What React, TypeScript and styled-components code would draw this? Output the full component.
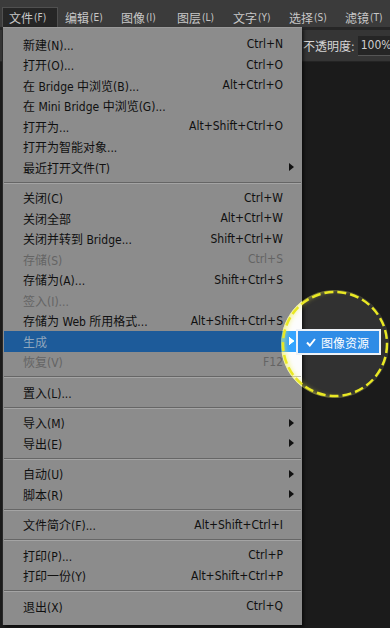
import React from 'react';
import styled, { createGlobalStyle } from 'styled-components';

type Item =
  | 'sep'
  | { label: string; sc?: string; sub?: boolean; off?: boolean; active?: boolean };

const items: Item[] = [
  { label: '新建(N)...', sc: 'Ctrl+N' },
  { label: '打开(O)...', sc: 'Ctrl+O' },
  { label: '在 Bridge 中浏览(B)...', sc: 'Alt+Ctrl+O' },
  { label: '在 Mini Bridge 中浏览(G)...' },
  { label: '打开为...', sc: 'Alt+Shift+Ctrl+O' },
  { label: '打开为智能对象...' },
  { label: '最近打开文件(T)', sub: true },
  'sep',
  { label: '关闭(C)', sc: 'Ctrl+W' },
  { label: '关闭全部', sc: 'Alt+Ctrl+W' },
  { label: '关闭并转到 Bridge...', sc: 'Shift+Ctrl+W' },
  { label: '存储(S)', sc: 'Ctrl+S', off: true },
  { label: '存储为(A)...', sc: 'Shift+Ctrl+S' },
  { label: '签入(I)...', off: true },
  { label: '存储为 Web 所用格式...', sc: 'Alt+Shift+Ctrl+S' },
  { label: '生成', sub: true, active: true },
  { label: '恢复(V)', sc: 'F12', off: true },
  'sep',
  { label: '置入(L)...' },
  'sep',
  { label: '导入(M)', sub: true },
  { label: '导出(E)', sub: true },
  'sep',
  { label: '自动(U)', sub: true },
  { label: '脚本(R)', sub: true },
  'sep',
  { label: '文件简介(F)...', sc: 'Alt+Shift+Ctrl+I' },
  'sep',
  { label: '打印(P)...', sc: 'Ctrl+P' },
  { label: '打印一份(Y)', sc: 'Alt+Shift+Ctrl+P' },
  'sep',
  { label: '退出(X)', sc: 'Ctrl+Q' },
];

const topMenus = [
  ['文件', 'F'],
  ['编辑', 'E'],
  ['图像', 'I'],
  ['图层', 'L'],
  ['文字', 'Y'],
  ['选择', 'S'],
  ['滤镜', 'T'],
];

const App: React.FC = () => {
  return (
    <>
      <GlobalStyle />
      <Screen>
        <MenuBar>
          {topMenus.map(([name, key], i) => (
            <TopItem key={name} $open={i === 0}>
              {name}
              <Mnemonic>({key})</Mnemonic>
            </TopItem>
          ))}
        </MenuBar>
        <OptionsBar>
          <OptionLabel>不透明度:</OptionLabel>
          <OptionInput>100%</OptionInput>
        </OptionsBar>
        <Workspace />

        <Dropdown>
          {items.map((it, i) =>
            it === 'sep' ? (
              <Separator key={i} />
            ) : (
              <Row key={i} $active={it.active}>
                <Label $off={it.off} $active={it.active}>
                  {it.label}
                </Label>
                <Shortcut $off={it.off}>{it.sc}</Shortcut>
                <ArrowCell>{it.sub && <Arrow $white={it.active} />}</ArrowCell>
              </Row>
            )
          )}
        </Dropdown>

        <Lens>
          <svg width="108" height="108" viewBox="0 0 108 108">
            <circle
              cx="54"
              cy="54"
              r="52"
              fill="none"
              stroke="#e9e824"
              strokeWidth="2.5"
              strokeDasharray="9 4"
            />
          </svg>
        </Lens>

        <SubMenu>
          <svg width="10" height="9" viewBox="0 0 10 9">
            <path d="M1 4.5 L3.8 7.5 L9 1" fill="none" stroke="#fff" strokeWidth="2" />
          </svg>
          <SubLabel>图像资源</SubLabel>
        </SubMenu>
      </Screen>
    </>
  );
};

export default App;

const menuGray = '#8c8c8c';
const uiFont = "'DejaVu Sans Condensed', 'Noto Sans CJK SC', sans-serif";

const GlobalStyle = createGlobalStyle`
  html, body {
    margin: 0;
    padding: 0;
    background: #1b1b1b;
  }
  body {
    font-family: ${uiFont};
  }
`;

const Screen = styled.div`
  position: relative;
  width: 390px;
  height: 628px;
  overflow: hidden;
  display: flex;
  flex-direction: column;
  background: #1b1b1b;
`;

const MenuBar = styled.div`
  height: 27px;
  flex: 0 0 27px;
  display: flex;
  align-items: flex-end;
  padding-left: 2px;
  background: #3b3b3b;
`;

const TopItem = styled.div<{ $open?: boolean }>`
  flex: 0 0 56px;
  height: 20px;
  box-sizing: border-box;
  padding-left: 6px;
  display: flex;
  align-items: center;
  font-size: 12px;
  color: #c8c8c8;
  white-space: nowrap;
  background: ${(p) => (p.$open ? '#262626' : 'transparent')};
  border: 1px solid ${(p) => (p.$open ? '#505050' : 'transparent')};
  border-bottom: none;
`;

const Mnemonic = styled.span`
  font-size: 10px;
  margin-left: 1px;
`;

const OptionsBar = styled.div`
  flex: 0 0 31px;
  display: flex;
  align-items: center;
  padding-left: 303px;
  gap: 3px;
  background: #353535;
  border-top: 3px solid #262626;
  border-bottom: 1px solid #242424;
`;

const OptionLabel = styled.span`
  font-size: 12px;
  color: #d6d6d6;
  white-space: nowrap;
`;

const OptionInput = styled.div`
  height: 19px;
  padding: 0 3px;
  display: flex;
  align-items: center;
  font-size: 12px;
  color: #cfcfcf;
  background: #252525;
  border-bottom: 1px solid #555;
  white-space: nowrap;
`;

const Workspace = styled.div`
  flex: 1;
  background: #1b1b1b;
`;

const Dropdown = styled.div`
  position: absolute;
  top: 27px;
  left: 3px;
  width: 299px;
  box-sizing: border-box;
  padding: 6px 1px 8px 1px;
  background: ${menuGray};
  border-top: 1px solid #9a9a9a;
  box-shadow: 2px 2px 3px rgba(0, 0, 0, 0.55), -1px 0 0 #2a2a2a;
`;

const Row = styled.div<{ $active?: boolean }>`
  height: 20.5px;
  display: grid;
  grid-template-columns: 1fr auto 18px;
  align-items: center;
  padding-left: 19px;
  background: ${(p) => (p.$active ? '#1d5b9a' : 'transparent')};
  font-size: 12px;
  white-space: nowrap;
`;

const Label = styled.span<{ $off?: boolean; $active?: boolean }>`
  color: ${(p) => (p.$active ? '#8fa6bd' : p.$off ? '#646464' : '#101010')};
`;

const Shortcut = styled.span<{ $off?: boolean }>`
  color: ${(p) => (p.$off ? '#646464' : '#101010')};
  text-align: right;
`;

const ArrowCell = styled.span`
  display: flex;
  align-items: center;
  padding-left: 6px;
`;

const Arrow = styled.span<{ $white?: boolean }>`
  width: 0;
  height: 0;
  border-top: 4px solid transparent;
  border-bottom: 4px solid transparent;
  border-left: 5px solid ${(p) => (p.$white ? '#ffffff' : '#111111')};
`;

const Separator = styled.div`
  height: 10px;
  display: flex;
  flex-direction: column;
  justify-content: center;
  &::before {
    content: '';
    height: 1px;
    background: #666666;
  }
  &::after {
    content: '';
    height: 1px;
    background: #a4a4a4;
  }
`;

const Lens = styled.div`
  position: absolute;
  left: 281px;
  top: 290px;
  width: 108px;
  height: 108px;
  border-radius: 50%;
  backdrop-filter: brightness(1.8);
  box-shadow: inset 4px 0 5px rgba(240, 240, 70, 0.55);
  svg {
    display: block;
  }
`;

const SubMenu = styled.div`
  position: absolute;
  left: 296px;
  top: 329px;
  width: 85px;
  height: 26px;
  box-sizing: border-box;
  display: flex;
  align-items: center;
  gap: 5px;
  padding-left: 8px;
  background: #2f8ce6;
  border: 2px solid #eef2f7;
`;

const SubLabel = styled.span`
  font-size: 12px;
  color: #ffffff;
  white-space: nowrap;
`;
